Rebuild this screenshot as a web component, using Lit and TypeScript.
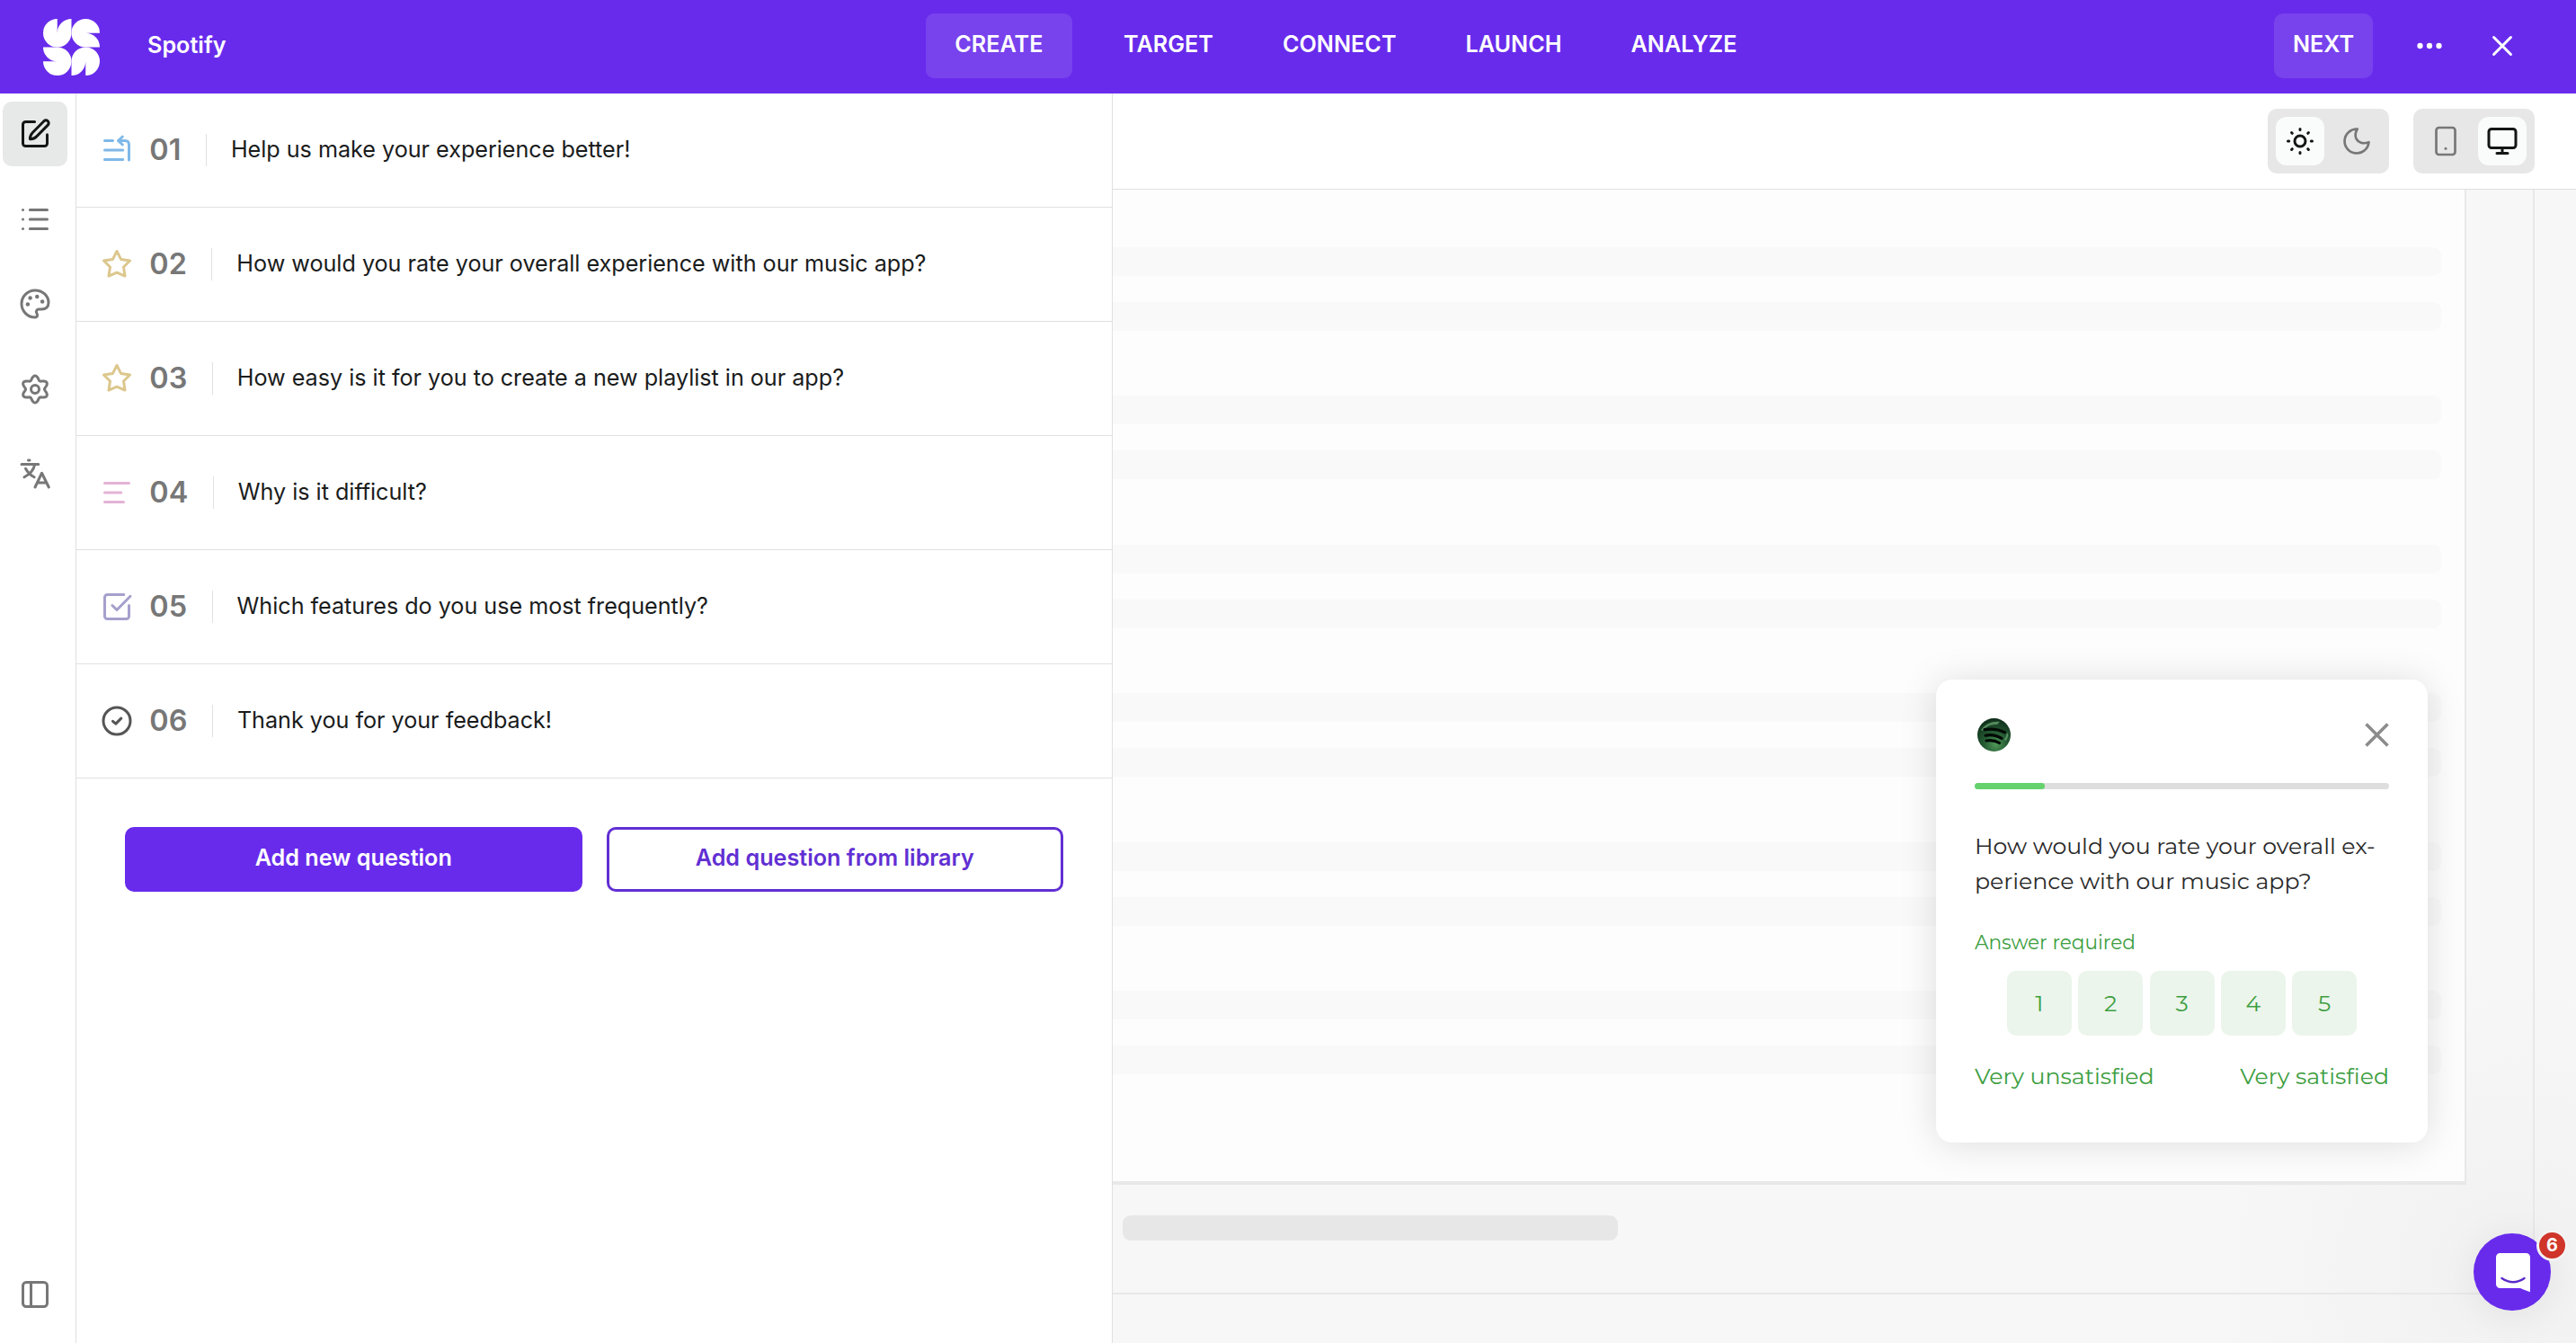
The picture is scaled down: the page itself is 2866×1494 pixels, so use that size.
import { LitElement, html, css, svg } from 'lit';
import type { TemplateResult } from 'lit';
import { customElement, property, state } from 'lit/decorators.js';
import { classMap } from 'lit/directives/class-map.js';
import { styleMap } from 'lit/directives/style-map.js';

type Body = unknown;

const lobedOutline = (lobes: number, mid: number, amp: number): string => {
  const pts: string[] = [];
  for (let i = 0; i < 120; i++) {
    const a = (i / 120) * Math.PI * 2;
    const r = mid + amp * Math.cos(lobes * a);
    pts.push(`${(12 + r * Math.sin(a)).toFixed(2)} ${(12 - r * Math.cos(a)).toFixed(2)}`);
  }
  return `M${pts.join('L')}Z`;
};

const star = svg`<path d="M12 2.300L15 8.300L21.700 9.300L17 14L18 20.700L12 18.100L6 20.700L7 14L2.300 9.300L9 8.300Z"/>`;

const shapes: Record<string, Body> = {
  edit: svg`<path d="M11.700 3H5a2 2 0 0 0-2 2V19a2 2 0 0 0 2 2h14a2 2 0 0 0 2-2v-6.500"/><path d="M18.600 2.500a2 2 0 0 1 2.900 2.900L13.100 13.900c-1.200 1.200-3.400 2-4.800 1.900-.1-1.400.7-3.600 1.900-4.800z"/>`,
  list: svg`<path d="M8.200 5H21M8.200 12H21M8.200 19H21M3 5h.01M3 12h.01M3 19h.01"/>`,
  palette: svg`<path d="M12 22C6.500 22 2 17.500 2 12S6.500 2 12 2s10 4 10 9.200c0 3.300-2.300 4.800-5 4.800h-2.200c-1.600 0-2.300 1.600-1.600 2.800.8 1.400.7 3.200-1.200 3.200z"/><g fill="currentColor" stroke="none"><circle cx="6.600" cy="12.400" r="1.500"/><circle cx="8.400" cy="7.600" r="1.500"/><circle cx="13.500" cy="6.600" r="1.500"/><circle cx="17.400" cy="10.400" r="1.500"/></g>`,
  gear: svg`<path d=${lobedOutline(6, 8.5, 1.5)}/><circle cx="12" cy="12" r="3"/>`,
  translate: svg`<path d="M7 2h1M2 5h12.500M11.800 5.200C11 9 8 12.500 4 14.500M5 8.200c1.500 2.800 3.600 5 6.400 6.300M12 22l5-10.500L22.200 22M13.700 18.700h6.800"/>`,
  panel: svg`<rect x="3" y="3" width="18" height="18" rx="2.500"/><path d="M9 3v18"/>`,
  jump: svg`<path d="M3 5h6M3 12h13.500M3 19h13.500M21 19.300V8q0-3-3-3h-5M16.200 2L13 5l3.200 3"/>`,
  star,
  lines: svg`<path d="M3 5h18M3 12h12.200M3 19h14"/>`,
  checkbox: svg`<path d="M17.200 3H5a2 2 0 0 0-2 2v14a2 2 0 0 0 2 2h14a2 2 0 0 0 2-2v-8M8.600 11L12 14.300 22 4.200"/>`,
  done: svg`<circle cx="12" cy="12" r="10"/><path d="M9 12.200l2.200 1.900 4-4"/>`,
  sun: svg`<circle cx="12" cy="12" r="4"/><path d="M12 3v.7M12 20.300v.7M3 12h.8M20.200 12h.8M5.700 5.700l.5.5M17.800 17.800l.5.5M18.300 5.700l-.5.5M6.200 17.800l-.5.5"/>`,
  moon: svg`<path d="M12.500 3A9 9 0 1 0 21 12.800c-4.500 1.600-8 .2-9.300-2.500-1-2.200-.6-5 .8-7.300z"/>`,
  tablet: svg`<rect x="5" y="2" width="14" height="20" rx="2"/><circle cx="12" cy="17.500" r="1" fill="currentColor" stroke="none"/>`,
  monitor: svg`<rect x="2" y="3" width="20" height="14" rx="2"/><path d="M12 17v4M8 21h8"/>`,
  more: svg`<g fill="currentColor" stroke="none"><circle cx="5" cy="12" r="2.100"/><circle cx="12" cy="12" r="2.100"/><circle cx="19" cy="12" r="2.100"/></g>`,
  close: svg`<path d="M5.700 5.700l12.600 12.600M18.300 5.700L5.700 18.300"/>`,
};

@customElement('ui-icon')
export class UiIcon extends LitElement {
  @property() name = 'list';
  @property({ type: Number }) weight = 2;

  static styles = css`
    :host { display: block; flex: none; width: 36px; height: 36px; }
    .glyph { display: block; width: 100%; height: 100%; overflow: visible; }
  `;

  render() {
    return html`<svg class="glyph" viewBox="0 0 24 24" fill="none" stroke="currentColor"
      stroke-width=${this.weight} stroke-linecap="round" stroke-linejoin="round">${shapes[this.name]}</svg>`;
  }
}

interface Question { no: string; text: string; icon: string; tone: string; }

const questions: Question[] = [
  { no: '01', text: 'Help us make your experience better!', icon: 'jump', tone: 'blue' },
  { no: '02', text: 'How would you rate your overall experience with our music app?', icon: 'star', tone: 'gold' },
  { no: '03', text: 'How easy is it for you to create a new playlist in our app?', icon: 'star', tone: 'gold' },
  { no: '04', text: 'Why is it difficult?', icon: 'lines', tone: 'pink' },
  { no: '05', text: 'Which features do you use most frequently?', icon: 'checkbox', tone: 'violet' },
  { no: '06', text: 'Thank you for your feedback!', icon: 'done', tone: 'dark' },
];

@customElement('top-bar')
export class TopBar extends LitElement {
  @state() private tab = 'CREATE';

  static styles = css`
    :host { display: grid; grid-template-columns: 1030px auto 1fr; align-items: center; flex: none; height: 104px; padding-bottom: 2px; box-sizing: border-box; background: #682bec; color: #fff; font-weight: 600; }
    .brand { display: flex; align-items: center; gap: 53px; padding: 2px 0 0 48px; }
    .mark { display: block; width: 63px; height: 63px; fill: #fff; }
    .name { padding-bottom: 4px; }
    .tabs { display: flex; gap: 12.6px; }
    .tab, .next { display: flex; align-items: center; justify-content: center; height: 72px; box-sizing: border-box; padding: 0 32.2px 4px; border-radius: 9px; cursor: pointer; }
    .active { background: #7842ed; margin-right: 12.6px; }
    .side { display: flex; align-items: center; justify-content: flex-end; padding-right: 64px; }
    .next { width: 110px; padding: 0 0 4px; background: #7842ed; border-radius: 10px; margin-right: 45px; }
    .more { margin-right: 45px; }
  `;

  render() {
    const petal = 'M0 16A16 16 0 0 1 16 0V16A16 16 0 0 1 32 0V16A16 16 0 0 1 0 16Z';
    return html`
      <div class="brand">
        <svg class="mark" viewBox="0 0 64 64">${[0, 90, 180, 270].map((a) => svg`<path d=${petal} transform="rotate(${a} 32 32)"/>`)}</svg>
        <span class="name">Spotify</span>
      </div>
      <nav class="tabs">
        ${['CREATE', 'TARGET', 'CONNECT', 'LAUNCH', 'ANALYZE'].map((t) => html`
          <span class=${classMap({ tab: true, active: this.tab === t })} @click=${() => (this.tab = t)}>${t}</span>`)}
      </nav>
      <div class="side">
        <span class="next">NEXT</span>
        <ui-icon class="more" name="more"></ui-icon>
        <ui-icon name="close"></ui-icon>
      </div>`;
  }
}

@customElement('question-panel')
export class QuestionPanel extends LitElement {
  static styles = css`
    :host { display: flex; flex-direction: column; flex: none; width: 1153px; box-sizing: border-box; border-right: 1px solid #e0e0e0; background: #fff; }
    .row { display: flex; align-items: center; height: 127px; box-sizing: border-box; padding-left: 27px; border-bottom: 1px solid #e1e1e1; }
    .no { margin: 0 27.500px 0 18.300px; padding-bottom: 1px; font-size: 32.4px; line-height: 40px; font-weight: 600; color: #777; }
    .text { height: 36px; line-height: 34px; padding-left: 27px; border-left: 1px solid #e1e1e1; white-space: nowrap; letter-spacing: -0.03px; }
    .blue { color: #7eb8e8; }
    .gold { color: #dcc78d; }
    .pink { color: #e3b3d6; }
    .violet { color: #a5a0cc; }
    .dark { color: #555; }
    .actions { display: grid; grid-template-columns: 1fr 1fr; gap: 27px; padding: 54px 54px 0 54px; }
    .btn { display: flex; align-items: center; justify-content: center; height: 72px; box-sizing: border-box; padding-bottom: 4px; border: 3px solid #682bec; border-radius: 10px; font-weight: 600; color: #fff; background: #682bec; }
    .outline { background: #fff; color: #612fd3; border-color: #612fd3; }
  `;

  render() {
    return html`
      ${questions.map((q) => html`
        <div class="row">
          <ui-icon class=${q.tone} name=${q.icon}></ui-icon>
          <span class="no">${q.no}</span>
          <span class="text">${q.text}</span>
        </div>`)}
      <div class="actions">
        <span class="btn">Add new question</span>
        <span class="btn outline">Add question from library</span>
      </div>`;
  }
}

@customElement('survey-card')
export class SurveyCard extends LitElement {
  @property({ type: Number }) progress = 17;

  static styles = css`
    :host { display: flex; flex-direction: column; width: 547px; height: 515px; box-sizing: border-box; padding: 43px; border-radius: 18px; background: #fff; box-shadow: 0 2px 42px rgba(0, 0, 0, 0.13); font-family: Montserrat, "Open Sans", sans-serif; color: #3d9e41; }
    .head { display: flex; justify-content: space-between; align-items: center; height: 37px; padding-left: 3px; }
    .logo { display: block; width: 37px; height: 37px; }
    .x { display: block; width: 27px; height: 27px; stroke: #8c8c8c; stroke-width: 3.600; }
    .track { flex: none; height: 7px; margin-top: 35px; border-radius: 4px; background: #dedede; }
    .fill { height: 100%; border-radius: 4px; background: #65d26d; }
    .ask { margin-top: 44px; line-height: 39px; color: #2a2a2a; white-space: nowrap; }
    .must { margin-top: 33px; font-size: 21.6px; line-height: 30px; }
    .scale { display: flex; justify-content: center; gap: 7.300px; margin-top: 17px; }
    .score { width: 72px; height: 72px; line-height: 72px; text-align: center; border-radius: 10px; background: #ebf5eb; }
    .ends { display: flex; justify-content: space-between; margin-top: 27px; line-height: 36px; }
  `;

  render(): TemplateResult {
    return html`
      <div class="head">
        <svg class="logo" viewBox="0 0 37 37">
          <defs><radialGradient id="g" cx="55%" cy="78%" r="85%"><stop offset="0" stop-color="#4f9a58"/><stop offset=".4" stop-color="#255c34"/><stop offset="1" stop-color="#0b2515"/></radialGradient></defs>
          <circle cx="18.500" cy="18.500" r="18.500" fill="url(#g)"/>
          <path d="M4 13C9 6 17 3 25 4L22 7Q12 6 6 14ZM30 24q2.500-4 3-8l1.500 2q-.5 4-3 7z" fill="#7fba83" opacity=".6"/>
          <path d="M8 12.700q12.500-2 22.500 3.100M9 19.200q9.500-2 18 3.200M10 25q8-1.500 14.500 2.500" fill="none" stroke="#020a05" stroke-width="3.200" stroke-linecap="round"/>
        </svg>
        <svg class="x" viewBox="0 0 27 27"><path d="M1.500 1.500l24 24M25.500 1.500l-24 24"/></svg>
      </div>
      <div class="track"><div class="fill" style=${styleMap({ width: `${this.progress}%` })}></div></div>
      <div class="ask">How would you rate your overall ex-<br>perience with our music app?</div>
      <div class="must">Answer required</div>
      <div class="scale">${[1, 2, 3, 4, 5].map((n) => html`<span class="score">${n}</span>`)}</div>
      <div class="ends"><span>Very unsatisfied</span><span>Very satisfied</span></div>`;
  }
}

@customElement('preview-pane')
export class PreviewPane extends LitElement {
  static styles = css`
    :host { display: flex; flex-direction: column; flex: 1; min-width: 0; background: #f7f7f7; }
    .bar { display: flex; justify-content: flex-end; align-items: center; gap: 27px; flex: none; height: 107px; box-sizing: border-box; padding-right: 46px; border-bottom: 1px solid #e0e0e0; background: #fff; }
    .group { display: flex; gap: 9px; padding: 9px; border-radius: 10px; background: #e7e7e7; color: #777; }
    .opt { display: flex; align-items: center; justify-content: center; width: 54px; height: 54px; border-radius: 12px; }
    .on { background: #fafbfb; color: #141616; }
    .stage { flex: 1; background: radial-gradient(circle 340px at 1560px 1210px, #f1f1f1, rgba(247, 247, 247, 0)); }
    .window { width: 1582px; height: 1229px; box-sizing: border-box; border: 0 solid #e8e8e8; border-width: 0 2px 2px 0; }
    .page { position: relative; display: flex; flex-direction: column; gap: 72.400px; width: 1506px; height: 1107px; box-sizing: border-box; padding: 64px 26px 0 0; background: #fdfdfd; border: 0 solid #e8e8e8; border-width: 0 2px 4px 0; }
    .pair { display: flex; flex-direction: column; gap: 29px; }
    .line { height: 32px; border-radius: 0 9px 9px 0; background: #f9f9f9; }
    .stub { width: 551px; height: 28px; margin: 34px 0 0 11px; border-radius: 9px; background: #e7e7e7; }
    .card { position: absolute; left: 916px; top: 545px; }
  `;

  render() {
    return html`
      <div class="bar">
        <div class="group">
          <span class="opt on"><ui-icon name="sun"></ui-icon></span>
          <span class="opt"><ui-icon name="moon" .weight=${1.8}></ui-icon></span>
        </div>
        <div class="group">
          <span class="opt"><ui-icon name="tablet" .weight=${1.8}></ui-icon></span>
          <span class="opt on"><ui-icon name="monitor"></ui-icon></span>
        </div>
      </div>
      <div class="stage">
        <div class="window">
          <div class="page">
            ${[0, 1, 2, 3, 4, 5].map(() => html`<div class="pair"><div class="line"></div><div class="line"></div></div>`)}
            <survey-card class="card"></survey-card>
          </div>
          <div class="stub"></div>
        </div>
      </div>`;
  }
}

@customElement('chat-launcher')
export class ChatLauncher extends LitElement {
  @property({ type: Number }) unread = 6;

  static styles = css`
    :host { display: block; width: 86px; height: 86px; }
    .disc { display: block; width: 86px; height: 86px; border-radius: 50%; box-shadow: 0 4px 44px rgba(0, 0, 0, 0.07); background: #682bec; }
    .badge { position: absolute; left: 70px; top: -4px; width: 35px; height: 35px; box-sizing: border-box; border: 3px solid #f3f3f3; border-radius: 50%; background: #cf3529; color: #fff; font: 700 19.800px/29px Inter, sans-serif; text-align: center; }
  `;

  render() {
    return html`
      <svg class="disc" viewBox="0 0 86 86">
        <path d="M29.500 22h29a4.500 4.500 0 0 1 4.500 4.500V65.200q-6-1.800-11-4.200H29.500a4.500 4.500 0 0 1-4.500-4.500v-30a4.500 4.500 0 0 1 4.500-4.500z" fill="#fff"/>
        <path d="M31.500 50q12.500 8.500 25 0" fill="none" stroke="#5a2bc9" stroke-width="2.400" stroke-linecap="round"/>
      </svg>
      <span class="badge">${this.unread}</span>`;
  }
}

@customElement('app-root')
export class AppRoot extends LitElement {
  static styles = css`
    :host { position: relative; display: flex; flex-direction: column; width: 100%; height: 100vh; overflow: hidden; background: #fff; font-family: Inter, sans-serif; font-size: 25.2px; color: #1a1c1c; }
    .main { display: flex; flex: 1; min-height: 0; }
    .rail { display: flex; flex-direction: column; gap: 22.500px; flex: none; width: 85px; box-sizing: border-box; padding: 9px 0 18px 3px; border-right: 1px solid #e0e0e0; color: #777; }
    .tool { display: flex; align-items: center; justify-content: center; width: 72px; height: 72px; border-radius: 10px; }
    .current { background: #e7e8e8; color: #141616; }
    .last { margin-top: auto; }
    .chat { position: absolute; left: 2752px; top: 1372px; }
  `;

  render() {
    return html`
      <top-bar></top-bar>
      <div class="main">
        <aside class="rail">
          ${['edit', 'list', 'palette', 'gear', 'translate', 'panel'].map((name) => html`
            <span class=${classMap({ tool: true, current: name === 'edit', last: name === 'panel' })}><ui-icon name=${name}></ui-icon></span>`)}
        </aside>
        <question-panel></question-panel>
        <preview-pane></preview-pane>
      </div>
      <chat-launcher class="chat"></chat-launcher>`;
  }
}
